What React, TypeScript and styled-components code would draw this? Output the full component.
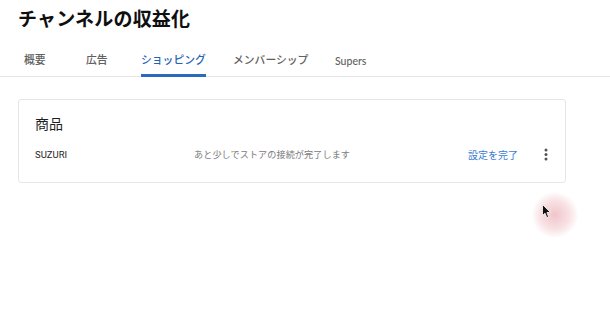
import styled, { createGlobalStyle } from 'styled-components'

const GlobalStyle = createGlobalStyle`
  html, body {
    margin: 0;
    padding: 0;
    background: #ffffff;
  }
  body {
    font-family: Roboto, "Noto Sans CJK JP", sans-serif;
    color: #0f0f0f;
  }
`

// ─── Page ────────────────────────────────────────────────────────────
const Page = styled.div`
  position: relative;
  width: 610px;
  height: 317px;
  overflow: hidden;
  background: #ffffff;
`

const Header = styled.header`
  padding: 6px 0 0 18px;
`

const Title = styled.h1`
  margin: 0;
  font-size: 19px;
  font-weight: 700;
  line-height: 28px;
  color: #0f0f0f;
  letter-spacing: 0.2px;
`

// ─── Tabs ────────────────────────────────────────────────────────────
const TabBar = styled.nav`
  display: grid;
  grid-template-columns: 62px 55px 92px 102px auto;
  justify-content: start;
  margin-top: 16px;
  padding-left: 24px;
  border-bottom: 1px solid #e5e5e5;
`

const Tab = styled.div<{ $active?: boolean }>`
  justify-self: start;
  padding: 4px 0 5px;
  font-size: 10.8px;
  line-height: 14px;
  font-weight: 500;
  color: ${p => (p.$active ? '#1f64b5' : '#606060')};
  border-bottom: 3px solid ${p => (p.$active ? '#2a6bbd' : 'transparent')};
  margin-bottom: -1px;
`

const Latin = styled.span`
  font-family: Lato, "Open Sans", sans-serif;
  font-size: 10.5px;
`

// ─── Card ────────────────────────────────────────────────────────────
const Content = styled.main`
  padding: 22px 0 0 18px;
`

const Card = styled.section`
  width: 548px;
  height: 84px;
  box-sizing: border-box;
  border: 1px solid #e6e6e6;
  border-radius: 3px;
  padding: 14px 0 0 16px;
`

const CardTitle = styled.h2`
  margin: 0;
  font-size: 14px;
  font-weight: 400;
  line-height: 20px;
  color: #1f1f1f;
`

const Row = styled.div`
  display: grid;
  grid-template-columns: 159px 1fr auto auto;
  align-items: center;
  margin-top: 10px;
  height: 20px;
`

const Name = styled.span`
  font-size: 9.5px;
  color: #1f1f1f;
`

const Status = styled.span`
  font-size: 9.1px;
  color: #7a7a7a;
  letter-spacing: 0.1px;
`

const ActionLink = styled.a`
  font-size: 10px;
  color: #3b7dd0;
  text-decoration: none;
  cursor: pointer;
`

const MenuButton = styled.button`
  display: flex;
  justify-content: center;
  align-items: center;
  margin: 0 9px 0 18px;
  width: 20px;
  height: 20px;
  padding: 0;
  border: none;
  background: transparent;
  color: #555555;
`

// ─── Cursor overlay ──────────────────────────────────────────────────
const ClickHalo = styled.div`
  position: absolute;
  left: 532px;
  top: 192px;
  width: 46px;
  height: 46px;
  border-radius: 50%;
  background: radial-gradient(circle, rgba(224, 140, 150, 0.5) 0%, rgba(232, 160, 168, 0.3) 45%, rgba(240, 190, 195, 0) 72%);
`

const Pointer = styled.svg`
  position: absolute;
  left: 542px;
  top: 204px;
`

export default function App() {
  return (
    <Page>
      <GlobalStyle />
      <Header>
        <Title>チャンネルの収益化</Title>
      </Header>
      <TabBar>
        <Tab>概要</Tab>
        <Tab>広告</Tab>
        <Tab $active>ショッピング</Tab>
        <Tab>メンバーシップ</Tab>
        <Tab><Latin>Supers</Latin></Tab>
      </TabBar>
      <Content>
        <Card>
          <CardTitle>商品</CardTitle>
          <Row>
            <Name>SUZURI</Name>
            <Status>あと少しでストアの接続が完了します</Status>
            <ActionLink>設定を完了</ActionLink>
            <MenuButton aria-label="その他">
              <svg width="4" height="13" viewBox="0 0 4 13">
                <circle cx="2" cy="2" r="1.5" fill="currentColor" />
                <circle cx="2" cy="6.5" r="1.5" fill="currentColor" />
                <circle cx="2" cy="11" r="1.5" fill="currentColor" />
              </svg>
            </MenuButton>
          </Row>
        </Card>
      </Content>
      <ClickHalo />
      <Pointer width="10" height="15" viewBox="0 0 10 15">
        <path d="M0.5 0.5 L0.5 11.5 L3 9.2 L4.8 13.6 L6.6 12.8 L4.9 8.6 L8.3 8.4 Z" fill="#111" stroke="#fff" strokeWidth="0.8" />
      </Pointer>
    </Page>
  )
}
